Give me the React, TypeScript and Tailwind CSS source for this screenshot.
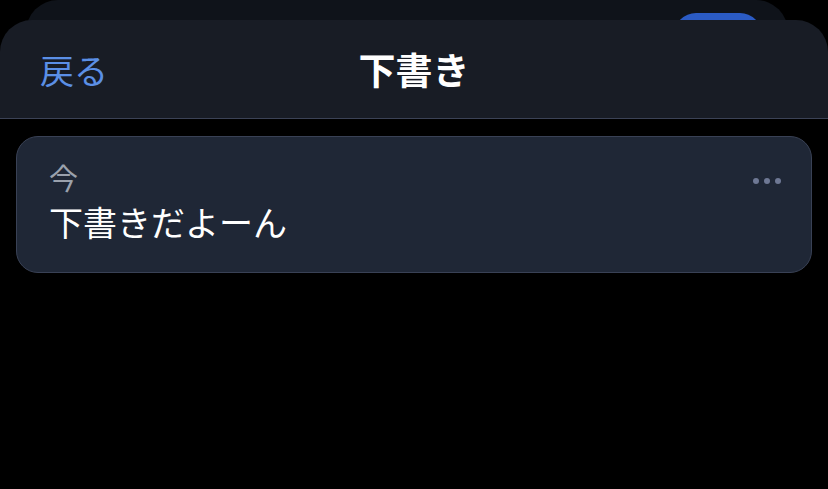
import React from "react";

export default function App() {
  const font = { fontFamily: '"Noto Sans CJK JP", "Noto Sans", sans-serif' };
  return (
    <div className="w-[828px] h-[489px] bg-black overflow-hidden relative" style={font}>
      {/* background sheet behind */}
      <div className="absolute left-[26px] top-0 w-[762px] h-[120px] bg-[#0f131a] rounded-t-[32px]">
        <div className="absolute left-[648px] top-[13px] w-[88px] h-[44px] rounded-full bg-[#2b5bc4]" />
      </div>
      <div className="absolute left-0 top-[20px] w-[828px] h-[469px] flex flex-col">
        <div className="h-[99px] bg-[#181c25] rounded-t-[32px] border-b border-[#3b4256] relative flex items-center justify-center">
          <span className="absolute left-[40px] top-[30px] text-[34px] leading-[40px] text-[#5b8fe6]">戻る</span>
          <span className="text-[37px] leading-[40px] font-bold text-white">下書き</span>
        </div>
        <div className="flex-1 bg-black px-[16px] pt-[17px]">
          <div className="h-[137px] rounded-[22px] bg-[#1f2736] border border-[#394155] relative px-[32px] pt-[20px]">
            <div className="text-[29px] leading-[40px] text-[#9aa1ad]">今</div>
            <div className="text-[34px] leading-[44px] text-white mt-[3px]">下書きだよーん</div>
            <div className="absolute right-[30px] top-[41px] flex gap-[5px]">
              <span className="w-[6px] h-[6px] rounded-full bg-[#6e7894]" />
              <span className="w-[6px] h-[6px] rounded-full bg-[#6e7894]" />
              <span className="w-[6px] h-[6px] rounded-full bg-[#6e7894]" />
            </div>
          </div>
        </div>
      </div>
    </div>
  );
}
